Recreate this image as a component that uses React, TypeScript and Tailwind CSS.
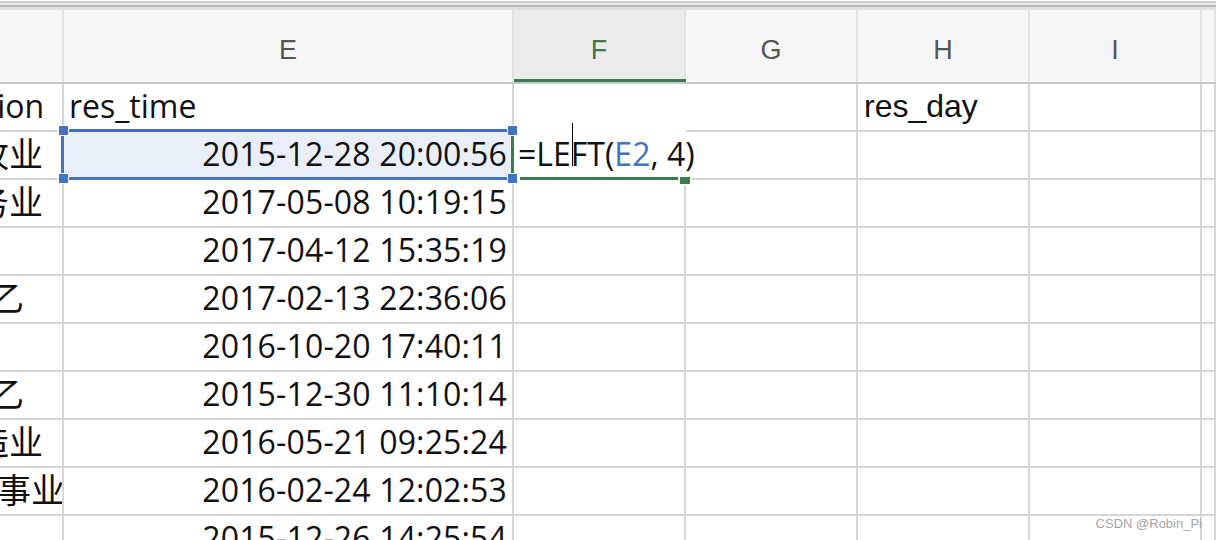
import React from 'react';

const COLS = 'grid grid-cols-[64px_450px_172px_172px_172px_172px_1fr]';
const CELL = 'h-[48px] border-r-2 border-b-2 border-[#d6d6d6] flex items-center pb-[2px]';

type Row = {
  d: string;
  // left shift of the clipped text in column D (the sheet is scrolled right)
  dShift: string;
  e: string;
};

const rows: Row[] = [
  { d: '畜牧业', dShift: '-ml-[59px]', e: '2015-12-28 20:00:56' },
  { d: '服务业', dShift: '-ml-[59px]', e: '2017-05-08 10:19:15' },
  { d: '', dShift: '', e: '2017-04-12 15:35:19' },
  { d: '乙', dShift: '-ml-[10px]', e: '2017-02-13 22:36:06' },
  { d: '', dShift: '', e: '2016-10-20 17:40:11' },
  { d: '乙', dShift: '-ml-[10px]', e: '2015-12-30 11:10:14' },
  { d: '制造业', dShift: '-ml-[59px]', e: '2016-05-21 09:25:24' },
  { d: '公共事业', dShift: '-ml-[71px]', e: '2016-02-24 12:02:53' },
  { d: '', dShift: '', e: '2015-12-26 14:25:54' },
];

function HeaderRow() {
  const letters = ['', 'E', 'F', 'G', 'H', 'I', ''];
  return (
    <div className={`${COLS} h-[74px] bg-[#f6f6f6] border-b-2 border-[#c8c8c8]`}>
      {letters.map((l, i) =>
        l === 'F' ? (
          <div key={i} className="border-r-2 border-[#e2e2e2] bg-[#ececec] flex flex-col">
            <div className="flex-1 flex items-center justify-center pt-[11px] text-[27px] text-[#3b7b4c] font-['Liberation_Sans',sans-serif]">
              F
            </div>
            <div className="h-[3px] bg-[#3b7b4c] -mr-[2px]" />
          </div>
        ) : (
          <div
            key={i}
            className="border-r-2 border-[#e2e2e2] flex items-center justify-center pt-[8px] text-[27px] text-[#555] font-['Liberation_Sans',sans-serif]"
          >
            {l}
          </div>
        ),
      )}
    </div>
  );
}

function Formula() {
  return (
    <span className="whitespace-nowrap">
      =LE
      <span className="relative">
        <span className="absolute left-[1px] top-[-9px] w-[1px] h-[43px] bg-black" />
      </span>
      FT(<span className="text-[#4472c4]">E2</span>, 4)
    </span>
  );
}

export default function App() {
  return (
    <div className="relative w-[1216px] h-[540px] overflow-hidden bg-white text-[#111] font-['Open_Sans','Noto_Sans_CJK_SC',sans-serif]">
      {/* window chrome lines above the column header */}
      <div className="h-[1px] bg-white" />
      <div className="h-[2px] bg-[#cfcfcf]" />
      <div className="h-[2px] bg-[#ececec]" />
      <div className="h-[2px] bg-[#b6b6b6]" />
      <div className="h-[3px] bg-[#e0e0e0]" />

      <HeaderRow />

      {/* row 1 */}
      <div className={COLS}>
        <div className={`${CELL} overflow-hidden text-[32px]`}>
          <span className="whitespace-nowrap shrink-0 -ml-[114px]">profession</span>
        </div>
        <div className={`${CELL} pl-[5px] text-[32px]`}>res_time</div>
        <div className={`${CELL} border-r-transparent border-b-transparent`} />
        <div className={CELL} />
        <div className={`${CELL} pl-[6px] text-[32px] font-['Liberation_Sans',sans-serif]`}>res_day</div>
        <div className={CELL} />
        <div className={CELL} />
      </div>

      {rows.map((r, i) => (
        <div key={i} className={COLS}>
          <div className={`${CELL} overflow-hidden text-[34px]`}>
            <span className={`whitespace-nowrap shrink-0 ${r.dShift}`}>{r.d}</span>
          </div>
          <div
            className={`${CELL} justify-end pr-[5px] text-[32px] tracking-[0.15px] ${i === 0 ? 'bg-[#e9eef8]' : ''}`}
          >
            {r.e}
          </div>
          <div
            className={`${CELL} pl-[4px] text-[32px] ${i === 0 ? 'border-r-transparent border-b-transparent' : ''}`}
          >
            {i === 0 ? <Formula /> : null}
          </div>
          <div className={CELL} />
          <div className={CELL} />
          <div className={CELL} />
          <div className={CELL} />
        </div>
      ))}

      {/* selection on E2 */}
      <div className="absolute left-[62px] top-[129px] w-[449px] h-[3px] bg-[#4472c4]" />
      <div className="absolute left-[62px] top-[177px] w-[449px] h-[3px] bg-[#4472c4]" />
      <div className="absolute left-[61px] top-[129px] w-[3px] h-[51px] bg-[#4472c4]" />
      <div className="absolute left-[511px] top-[134px] w-[3px] h-[43px] bg-[#3b7b4c]" />
      <div className="absolute left-[58px] top-[125px] w-[11px] h-[11px] bg-[#4472c4] border border-white" />
      <div className="absolute left-[58px] top-[173px] w-[11px] h-[11px] bg-[#4472c4] border border-white" />
      <div className="absolute left-[507px] top-[125px] w-[11px] h-[11px] bg-[#4472c4] border border-white" />
      <div className="absolute left-[507px] top-[173px] w-[11px] h-[11px] bg-[#4472c4] border border-white" />

      {/* edit box on F2 */}
      <div className="absolute left-[520px] top-[177px] w-[158px] h-[3px] bg-[#3b7b4c]" />
      <div className="absolute left-[679px] top-[176px] w-[12px] h-[9px] bg-[#3b7b4c] border border-white" />

      {/* watermark */}
      <div className="absolute right-[14px] top-[516px] text-[13px] leading-[15px] text-[#a3a3a3] font-['Liberation_Sans',sans-serif]">
        CSDN @Robin_Pi
      </div>
    </div>
  );
}
